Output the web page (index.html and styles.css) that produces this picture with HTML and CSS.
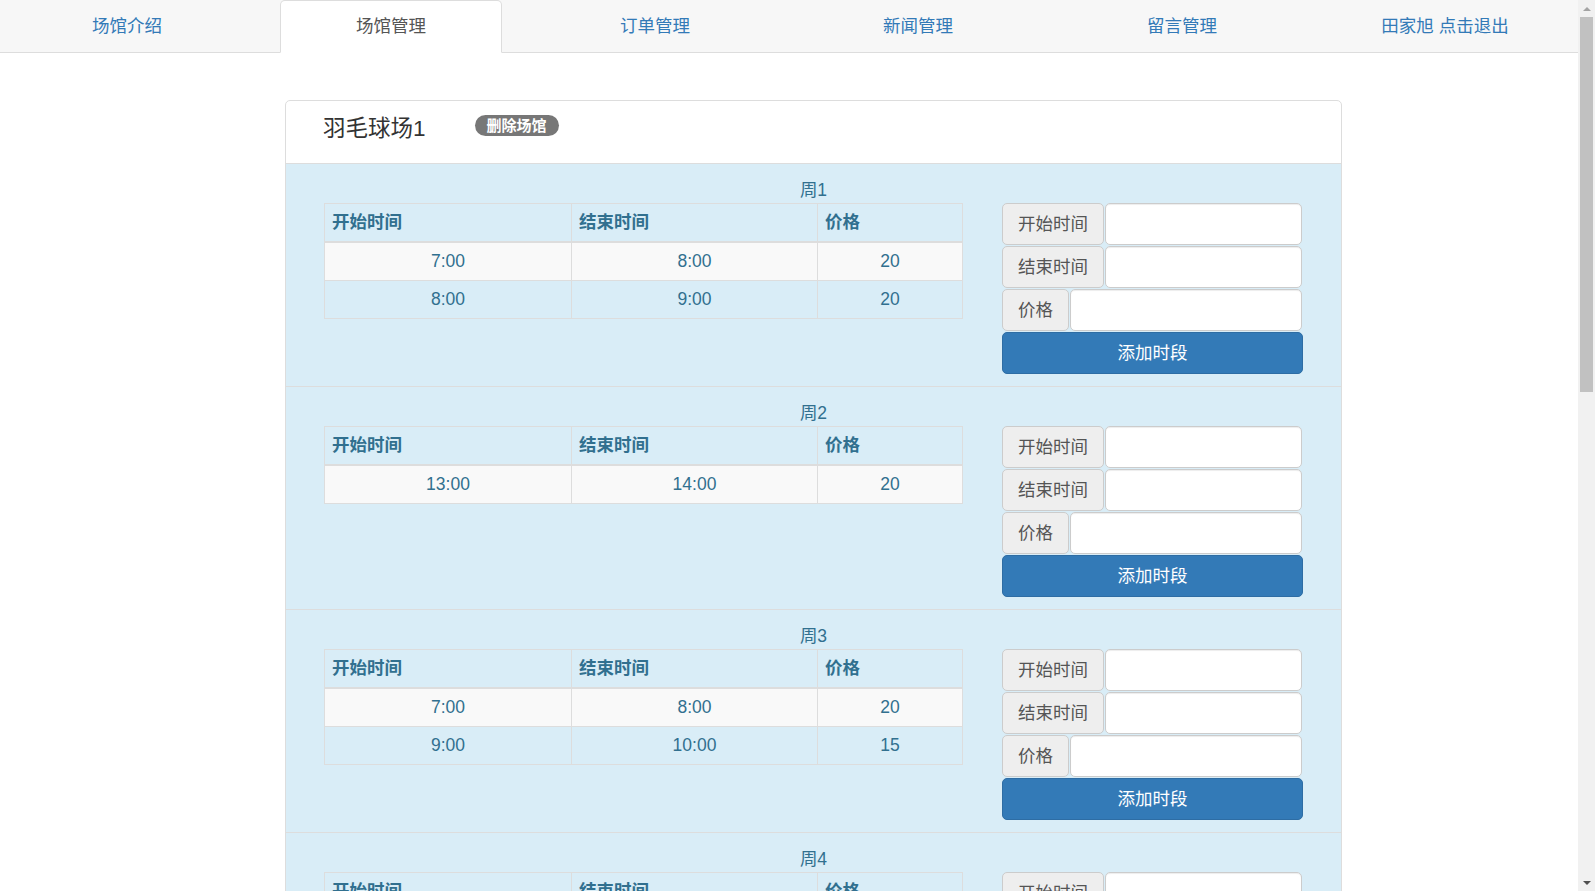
FILE: index.html
```html
<!DOCTYPE html>
<html lang="zh-CN">
<head>
<meta charset="utf-8">
<title>场馆管理</title>
<link rel="stylesheet" href="styles.css">
</head>
<body>
<div class="viewport">
<nav class="topnav">
  <ul class="tabs">
    <li class="tab tab-first"><a class="tab-link">场馆介绍</a></li>
    <li class="tab tab-active"><a class="tab-link">场馆管理</a></li>
    <li class="tab"><a class="tab-link">订单管理</a></li>
    <li class="tab"><a class="tab-link">新闻管理</a></li>
    <li class="tab"><a class="tab-link">留言管理</a></li>
    <li class="tab tab-last"><a class="tab-link">田家旭 点击退出</a></li>
  </ul>
</nav>

<main class="page">
  <section class="panel">
    <header class="panel-heading">
      <h4 class="venue-title">羽毛球场1</h4>
      <span class="badge">删除场馆</span>
    </header>
    <ul class="days">
      <li class="day">
        <div class="day-title">周1</div>
        <div class="day-body">
          <table class="slots">
            <colgroup><col class="c1"><col class="c2"><col class="c3"></colgroup>
            <thead><tr><th>开始时间</th><th>结束时间</th><th>价格</th></tr></thead>
            <tbody>
              <tr><td>7:00</td><td>8:00</td><td>20</td></tr>
              <tr><td>8:00</td><td>9:00</td><td>20</td></tr>
            </tbody>
          </table>
          <form class="slot-form">
            <div class="input-group"><span class="addon">开始时间</span><input class="field" type="text"></div>
            <div class="input-group"><span class="addon">结束时间</span><input class="field" type="text"></div>
            <div class="input-group"><span class="addon">价格</span><input class="field" type="text"></div>
            <button class="btn-add" type="button">添加时段</button>
          </form>
        </div>
      </li>
      <li class="day">
        <div class="day-title">周2</div>
        <div class="day-body">
          <table class="slots">
            <colgroup><col class="c1"><col class="c2"><col class="c3"></colgroup>
            <thead><tr><th>开始时间</th><th>结束时间</th><th>价格</th></tr></thead>
            <tbody>
              <tr><td>13:00</td><td>14:00</td><td>20</td></tr>
            </tbody>
          </table>
          <form class="slot-form">
            <div class="input-group"><span class="addon">开始时间</span><input class="field" type="text"></div>
            <div class="input-group"><span class="addon">结束时间</span><input class="field" type="text"></div>
            <div class="input-group"><span class="addon">价格</span><input class="field" type="text"></div>
            <button class="btn-add" type="button">添加时段</button>
          </form>
        </div>
      </li>
      <li class="day">
        <div class="day-title">周3</div>
        <div class="day-body">
          <table class="slots">
            <colgroup><col class="c1"><col class="c2"><col class="c3"></colgroup>
            <thead><tr><th>开始时间</th><th>结束时间</th><th>价格</th></tr></thead>
            <tbody>
              <tr><td>7:00</td><td>8:00</td><td>20</td></tr>
              <tr><td>9:00</td><td>10:00</td><td>15</td></tr>
            </tbody>
          </table>
          <form class="slot-form">
            <div class="input-group"><span class="addon">开始时间</span><input class="field" type="text"></div>
            <div class="input-group"><span class="addon">结束时间</span><input class="field" type="text"></div>
            <div class="input-group"><span class="addon">价格</span><input class="field" type="text"></div>
            <button class="btn-add" type="button">添加时段</button>
          </form>
        </div>
      </li>
      <li class="day">
        <div class="day-title">周4</div>
        <div class="day-body">
          <table class="slots">
            <colgroup><col class="c1"><col class="c2"><col class="c3"></colgroup>
            <thead><tr><th>开始时间</th><th>结束时间</th><th>价格</th></tr></thead>
            <tbody>
              <tr><td>7:00</td><td>8:00</td><td>20</td></tr>
            </tbody>
          </table>
          <form class="slot-form">
            <div class="input-group"><span class="addon">开始时间</span><input class="field" type="text"></div>
            <div class="input-group"><span class="addon">结束时间</span><input class="field" type="text"></div>
            <div class="input-group"><span class="addon">价格</span><input class="field" type="text"></div>
            <button class="btn-add" type="button">添加时段</button>
          </form>
        </div>
      </li>
    </ul>
  </section>
</main>
</div>
<div class="scrollbar" aria-hidden="true">
  <div class="sb-btn"><span class="sb-arrow-up"></span></div>
  <div class="sb-thumb"></div>
  <div class="sb-track"></div>
  <div class="sb-btn"><span class="sb-arrow-down"></span></div>
</div>
</body>
</html>
```
FILE: styles.css
```css
* { box-sizing: border-box; }

html, body {
  margin: 0;
  padding: 0;
  height: 891px;
  overflow: hidden;
}

body {
  display: flex;
  background: #fff;
  color: #333;
  font-family: "Liberation Sans", "Noto Sans CJK SC", sans-serif;
  font-size: 17.5px;
  line-height: 25px;
}

.viewport {
  flex: 1;
  min-width: 0;
  height: 891px;
  overflow: hidden;
}

/* ---------- fake window scrollbar ---------- */
.scrollbar {
  flex: none;
  width: 17px;
  height: 891px;
  background: #f1f1f1;
  display: flex;
  flex-direction: column;
}

.sb-btn {
  height: 17px;
  display: flex;
  align-items: center;
  justify-content: center;
}

.sb-arrow-up {
  width: 0;
  height: 0;
  border-left: 4px solid transparent;
  border-right: 4px solid transparent;
  border-bottom: 4px solid #a3a3a3;
}

.sb-arrow-down {
  width: 0;
  height: 0;
  border-left: 4px solid transparent;
  border-right: 4px solid transparent;
  border-top: 4px solid #505050;
}

.sb-thumb {
  height: 375px;
  margin: 0 2px;
  background: #c1c1c1;
}

.sb-track {
  flex: 1;
}

/* ---------- top navigation ---------- */
.topnav {
  background: #f7f7f7;
  border-bottom: 1px solid #ddd;
  height: 53px;
}

.tabs {
  list-style: none;
  margin: 0;
  padding: 0;
  display: grid;
  grid-template-columns: 280px 222px 306px 220px 308px 1fr;
  height: 52px;
}

.tab {
  text-align: center;
}

.tab-link {
  display: block;
  height: 52px;
  line-height: 50px;
  border-top: 1px solid transparent;
  color: #337ab7;
  text-decoration: none;
  white-space: nowrap;
}

.tab-first .tab-link { padding-right: 26px; }
.tab-last .tab-link { padding-right: 24px; }

.tab-active .tab-link {
  height: 53px;
  background: #fff;
  color: #555;
  border: 1px solid #ddd;
  border-bottom-color: transparent;
  border-radius: 5px 5px 0 0;
}

/* ---------- panel ---------- */
.page {
  padding-top: 47px;
}

.panel {
  margin-left: 285px;
  width: 1057px;
  border: 1px solid #ddd;
  border-radius: 5px;
  background: #fff;
}

.panel-heading {
  display: flex;
  align-items: flex-start;
  height: 63px;
  padding-left: 37px;
  border-bottom: 1px solid #ddd;
}

.venue-title {
  margin: 15px 0 0;
  font-size: 22.5px;
  font-weight: normal;
  line-height: 26px;
  color: #333;
}

.badge {
  margin: 14px 0 0 49px;
  padding: 3px 12px;
  background: #777;
  color: #fff;
  font-size: 15px;
  font-weight: bold;
  line-height: 15px;
  border-radius: 11px;
  white-space: nowrap;
}

/* ---------- days list ---------- */
.days {
  list-style: none;
  margin: 0;
  padding: 0;
}

.day {
  background: #d9edf7;
  color: #31708f;
  padding: 13px 0 12px 38px;
  border-bottom: 1px solid #ddd;
}

.day-title {
  text-align: center;
  line-height: 26px;
  padding-right: 38px;
}

.day-body {
  display: flex;
  align-items: flex-start;
  gap: 39px;
}

/* ---------- table ---------- */
.slots {
  width: 638px;
  border-collapse: collapse;
  table-layout: fixed;
  border: 1px solid #ddd;
}

.slots .c1 { width: 247px; }
.slots .c2 { width: 246px; }
.slots .c3 { width: 145px; }

.slots th,
.slots td {
  border: 1px solid #ddd;
  padding: 6px 7px;
  line-height: 25px;
  height: 37px;
}

.slots th {
  text-align: left;
  font-weight: bold;
  border-bottom-width: 2px;
}

.slots td {
  text-align: center;
}

.slots tbody tr:nth-child(odd) {
  background: #f9f9f9;
}

/* ---------- form ---------- */
.slot-form {
  width: 301px;
  margin: 0;
  display: flex;
  flex-direction: column;
  gap: 1px;
}

.input-group {
  display: flex;
  gap: 1px;
  width: 300px;
  height: 42px;
}

.addon {
  flex: none;
  padding: 0 15px;
  line-height: 40px;
  background: #eee;
  color: #555;
  border: 1px solid #ccc;
  border-radius: 5px;
  white-space: nowrap;
}

.field {
  flex: 1;
  min-width: 0;
  height: 42px;
  border: 1px solid #ccc;
  border-radius: 5px;
  background: #fff;
  box-shadow: inset 0 1px 1px rgba(0, 0, 0, 0.075);
  font: inherit;
  padding: 0 15px;
  outline: none;
}

.btn-add {
  width: 301px;
  height: 42px;
  background: #337ab7;
  border: 1px solid #2e6da4;
  border-radius: 5px;
  color: #fff;
  font: inherit;
  line-height: 40px;
  padding: 0;
  cursor: pointer;
}
```
